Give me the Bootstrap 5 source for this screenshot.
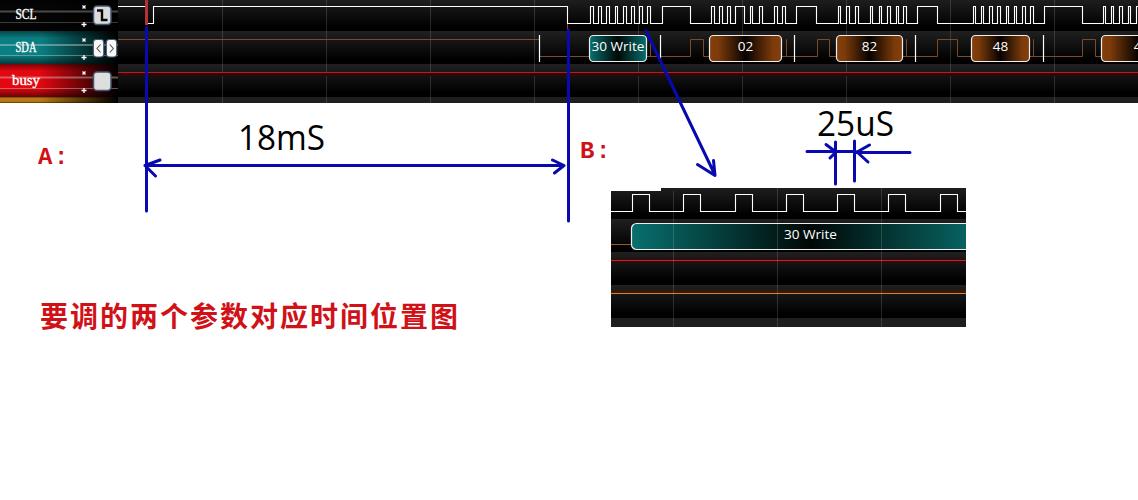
<!DOCTYPE html>
<html lang="zh-CN">
<head>
<meta charset="utf-8">
<meta name="viewport" content="width=device-width, initial-scale=1">
<title>要调的两个参数对应时间位置图</title>
<link href="https://cdn.jsdelivr.net/npm/bootstrap@5.3.0/dist/css/bootstrap.min.css" rel="stylesheet">
<style>
body{background:#fff;font-family:"Noto Sans","Open Sans",sans-serif}
.sheet{width:1138px;height:500px}
.channels{width:118px;height:103px;background:#000}
.ch{height:33px}
.ch-scl{height:31px;--tone:#050505}
.ch-sda{--tone:#0a7f82}
.ch-busy{--tone:#e30710}
.ch-next{height:6px;--tone:#b87a10}
.ch{background:linear-gradient(180deg,rgba(0,0,0,.45) 0,transparent 22%,transparent 72%,rgba(0,0,0,.55) 100%),linear-gradient(90deg,var(--tone) 0,var(--tone) 34%,#000 100%)}
.ch svg,.trace,.detail svg,.notes{display:block}
.detail{width:355px;height:139px;margin-left:611px;margin-top:85px}
.note-title{margin:-30px 0 0 40px;font:700 28px/36px "Noto Sans CJK SC",sans-serif;letter-spacing:2px;color:#d01218;white-space:nowrap}
.wave{fill:none;stroke:#fff;stroke-width:1.1}
.data-line{fill:none;stroke:#7d4a2a;stroke-width:1}
.stop-mark{fill:none;stroke:#fff;stroke-width:1.2}
.grid-mark{fill:none;stroke:#fff;stroke-opacity:.14}
.bubble{stroke:#eee;stroke-width:1.2}
.val{fill:#fff;font:13.5px "Open Sans","Noto Sans",sans-serif;text-anchor:middle}
.ch-name{fill:#fff;font:14px "Liberation Serif",serif;stroke:#fff;stroke-width:.35}
.ink{fill:none;stroke:#0909b0;stroke-width:3;stroke-linecap:round;stroke-linejoin:round}
.time{font:34px "Open Sans","Noto Sans",sans-serif;fill:#000}
.tag{font:700 24px "Liberation Mono","Noto Sans CJK SC",monospace;fill:#d01218}
</style>
</head>
<body>
<main class="sheet position-relative overflow-hidden">
 <section class="d-flex">
  <div class="channels d-flex flex-column">
   <div class="ch ch-scl"><svg width="118" height="31" viewBox="0 0 118 31">
    <path d="M0 11.5H118" stroke="#bbb" stroke-opacity=".38" stroke-width="2"/><path d="M0 22.5H118" stroke="#bbb" stroke-opacity=".3"/>
    <text class="ch-name" x="15.5" y="19" textLength="21" lengthAdjust="spacingAndGlyphs">SCL</text>
    <path d="M82.5 5.5l3 3m0-3l-3 3M81.5 24.5h5M84 22v5" stroke="#fff" stroke-width="1.3"/>
    <rect x="93.5" y="6" width="17.5" height="18.5" rx="3.5" fill="#dcdcdc" stroke="#40566e" stroke-width="1.5"/>
    <path d="M97 10.5H102V20H107.5" fill="none" stroke="#080808" stroke-width="2.4"/>
   </svg></div>
   <div class="ch ch-sda"><svg width="118" height="33" viewBox="0 31 118 33">
    <path d="M0 45H118" stroke="#ddd" stroke-opacity=".4" stroke-width="2"/><path d="M0 55.5H118" stroke="#ddd" stroke-opacity=".4"/>
    <text class="ch-name" x="15.5" y="52" textLength="21" lengthAdjust="spacingAndGlyphs">SDA</text>
    <path d="M82.5 38.5l3 3m0-3l-3 3M81.5 57.5h5M84 55v5" stroke="#fff" stroke-width="1.3"/>
    <g fill="#f8f8f8" stroke="#40566e" stroke-width="1.2"><rect x="93.3" y="39.5" width="10.5" height="17.5" rx="3"/><rect x="106.3" y="39.5" width="10.5" height="17.5" rx="3"/></g>
    <path d="M100.5 44.5l-3.5 4 3.5 4M109.8 44.5l3.5 4-3.5 4" fill="none" stroke="#555" stroke-width="1.1"/>
   </svg></div>
   <div class="ch ch-busy"><svg width="118" height="33" viewBox="0 64 118 33">
    <path d="M0 77.5H118" stroke="#ddd" stroke-opacity=".4" stroke-width="2"/><path d="M0 88.5H118" stroke="#ddd" stroke-opacity=".4"/>
    <text class="ch-name" x="12" y="85" textLength="28" lengthAdjust="spacingAndGlyphs">busy</text>
    <path d="M82.5 71.5l3 3m0-3l-3 3M81.5 90.5h5M84 88v5" stroke="#fff" stroke-width="1.3"/>
    <rect x="93.5" y="72" width="17.5" height="18.5" rx="3.5" fill="#dedede" stroke="#40566e" stroke-width="1.5"/>
   </svg></div>
   <div class="ch ch-next"></div>
  </div>
  <svg class="trace" width="1020" height="103" viewBox="118 0 1020 103">
   <defs>
    <linearGradient id="lane" x2="0" y2="1"><stop stop-color="#202020"/><stop offset=".3" stop-color="#151515"/><stop offset=".85" stop-color="#010101"/><stop offset="1" stop-color="#000"/></linearGradient>
    <linearGradient id="teal"><stop stop-color="#08706e"/><stop offset=".5" stop-color="#000806"/><stop offset="1" stop-color="#08706e"/></linearGradient>
    <linearGradient id="amber"><stop stop-color="#843f0c"/><stop offset=".12" stop-color="#7c3b0a"/><stop offset=".5" stop-color="#060200"/><stop offset=".88" stop-color="#7c3b0a"/><stop offset="1" stop-color="#843f0c"/></linearGradient>
   </defs>
   <g fill="url(#lane)"><rect x="118" y="-2" width="1020" height="33"/><rect x="118" y="31" width="1020" height="33"/><rect x="118" y="64" width="1020" height="33"/></g>
   <rect x="118" y="97" width="1020" height="6" fill="#1e1e1e"/>
   <path class="grid-mark" d="M222.5 0V103M326.5 0V103M430.5 0V103M534.5 0V103M638.5 0V103M742.5 0V103M846.5 0V103M950.5 0V103M1054.5 0V103"/>
   <path class="wave" d="M118 6.5H146.5V23.5H153.5V6.5H567.5V23.5H590.5V6.5H593.5V23.5H598.5V6.5H601.5V23.5H606.5V6.5H609.5V23.5H615.5V6.5H617.5V23.5H623.5V6.5H626.5V23.5H631.5V6.5H634.5V23.5H639.5V6.5H642.5V23.5H647.5V6.5H650.5V23.5H662.5V6.5H690.5V23.5H711.5V6.5H714.5V23.5H719.5V6.5H722.5V23.5H727.5V6.5H730.5V23.5H735.5V6.5H744.5V23.5H750.5V6.5H752.5V23.5H759.5V6.5H762.5V23.5H774.5V6.5H777.5V23.5H782.5V6.5H785.5V23.5H796.5V6.5H816.5V23.5H838.5V6.5H840.5V23.5H846.5V6.5H849.5V23.5H855.5V6.5H858.5V23.5H870.5V6.5H872.5V23.5H879.5V6.5H881.5V23.5H887.5V6.5H890.5V23.5H896.5V6.5H898.5V23.5H903.5V6.5H906.5V23.5H917.5V6.5H937.5V23.5H973.5V6.5H975.5V23.5H981.5V6.5H983.5V23.5H989.5V6.5H992.5V23.5H997.5V6.5H1000.5V23.5H1006.5V6.5H1008.5V23.5H1014.5V6.5H1016.5V23.5H1022.5V6.5H1025.5V23.5H1030.5V6.5H1033.5V23.5H1044.5V6.5H1082.5V23.5H1103.5V6.5H1105.5V23.5H1111.5V6.5H1113.5V23.5H1119.5V6.5H1122.5V23.5H1128.5V6.5H1130.5V23.5H1136.5V6.5H1138"/>
   <path class="data-line" d="M118 39.5H539.5V56.5H650.5V39.5V56.5H690.5V39.5H703.5V56.5H786.5V39.5V56.5H817.5V39.5H829.5V56.5H906.5V39.5V56.5H937.5V39.5H957.5V56.5H1033.5V39.5V56.5H1082.5V39.5H1095.5V56.5H1138"/>
   <path class="stop-mark" d="M539.5 35V62M660.5 35V62M794.5 35V62M915.5 35V62M1043.5 35V62"/>
   <rect class="bubble" x="589.5" y="35.5" width="57" height="26" rx="4" fill="url(#teal)"/><text class="val" x="618" y="51" textLength="53" lengthAdjust="spacingAndGlyphs">30 Write</text>
   <g class="bubble" fill="url(#amber)"><rect x="709.5" y="35.5" width="72" height="26" rx="4"/><rect x="836.5" y="35.5" width="66" height="26" rx="4"/><rect x="971.5" y="35.5" width="58" height="26" rx="4"/><rect x="1101.5" y="35.5" width="73" height="26" rx="4"/></g>
   <text class="val" x="745.5" y="51">02</text><text class="val" x="869.5" y="51">82</text><text class="val" x="1000.5" y="51">48</text><text class="val" x="1137.5" y="51">4</text>
   <path d="M118 74.5H1138" stroke="#330609" stroke-width="3"/><path d="M118 72.5H1138" stroke="#b81b25"/>
   <path d="M146.5 0V25" stroke="#b43236" stroke-width="3"/>
   <path d="M567.5 24V30" stroke="#b43236"/>
  </svg>
 </section>

 <section class="detail">
  <svg width="355" height="139" viewBox="611 188 355 139">
   <g fill="url(#lane)"><rect x="611" y="186" width="355" height="33"/><rect x="611" y="219" width="355" height="33"/><rect x="611" y="252" width="355" height="33"/><rect x="611" y="285" width="355" height="33"/></g>
   <rect x="611" y="318" width="355" height="9" fill="#1e1e1e"/><rect x="611" y="188" width="50" height="3" fill="#fff"/>
   <path class="wave" d="M611 211.5H632.5V194.5H649.5V211.5H683.5V194.5H700.5V211.5H735.5V194.5H752.5V211.5H786.5V194.5H803.5V211.5H837.5V194.5H854.5V211.5H888.5V194.5H905.5V211.5H940.5V194.5H957.5V211.5H966"/>
   <path d="M611 244.5H631" stroke="#9a5a24"/>
   <rect class="bubble" x="631.5" y="223.5" width="359" height="26" rx="5" fill="url(#teal)"/>
   <text class="val" x="810.5" y="239" textLength="53" lengthAdjust="spacingAndGlyphs">30 Write</text>
   <path d="M611 260.5H966" stroke="#38080b" stroke-width="4"/><path d="M611 260.5H966" stroke="#b52a31"/>
   <path d="M611 292H966" stroke="#351a06" stroke-width="4"/><path d="M611 293.5H966" stroke="#d77f3d"/>
   <path class="grid-mark" d="M673.5 191V327M777.5 188V327M881.5 188V327"/>
  </svg>
 </section>
 <h1 class="note-title">要调的两个参数对应时间位置图</h1>

 <svg class="notes position-absolute top-0 start-0 pe-none" width="1138" height="500" viewBox="0 0 1138 500">
  <path class="ink" d="M146.5 27V211M568.5 30V221M145 165.5H563M160 160L145 165.5L155.5 176M552.5 160L564 165.5L554.5 173"/>
  <path class="ink" d="M646 31L715 175M697.5 164.5L715 175.5L713.5 160.5"/>
  <path class="ink" d="M835.5 142V184M854.5 141V181M807 151.5H856M826 144.5L836 152L830 158M857 152.5H910M869.5 145L857 152L868 162"/>
  <text class="time" x="238" y="150" textLength="87" lengthAdjust="spacingAndGlyphs">18mS</text>
  <text class="time" x="817" y="136" textLength="77" lengthAdjust="spacingAndGlyphs">25uS</text>
  <text class="tag" x="38" y="164">A<tspan x="54">:</tspan></text>
  <text class="tag" x="580" y="158">B<tspan x="596">:</tspan></text>
 </svg>
</main>
<script src="https://cdn.jsdelivr.net/npm/bootstrap@5.3.0/dist/js/bootstrap.bundle.min.js"></script>
</body>
</html>
